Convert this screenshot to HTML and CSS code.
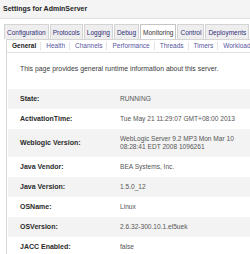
FILE: index.html
```html
<!DOCTYPE html>
<html lang="en">
<head>
    <meta charset="UTF-8">
    <title>Settings for AdminServer</title>
    <link rel="stylesheet" href="styles.css">
</head>
<body>
    <div class="header">
        <h1>Settings for AdminServer</h1>
    </div>

    <ul class="tabs">
        <li>Configuration</li>
        <li>Protocols</li>
        <li>Logging</li>
        <li>Debug</li>
        <li class="active">Monitoring</li>
        <li>Control</li>
        <li>Deployments</li>
    </ul>

    <div class="panel">
        <ul class="subtabs">
            <li class="active">General</li>
            <li>Health</li>
            <li>Channels</li>
            <li>Performance</li>
            <li>Threads</li>
            <li>Timers</li>
            <li>Workload</li>
        </ul>

        <p class="intro">This page provides general runtime information about this server.</p>

        <table class="info">
            <tr class="odd"><th>State:</th><td>RUNNING</td></tr>
            <tr><th>ActivationTime:</th><td>Tue May 21 11:29:07 GMT+08:00 2013</td></tr>
            <tr class="odd"><th>Weblogic Version:</th><td>WebLogic Server 9.2 MP3 Mon Mar 10 08:28:41 EDT 2008 1096261</td></tr>
            <tr><th>Java Vendor:</th><td>BEA Systems, Inc.</td></tr>
            <tr class="odd"><th>Java Version:</th><td>1.5.0_12</td></tr>
            <tr><th>OSName:</th><td>Linux</td></tr>
            <tr class="odd"><th>OSVersion:</th><td>2.6.32-300.10.1.el5uek</td></tr>
            <tr><th>JACC Enabled:</th><td>false</td></tr>
        </table>
    </div>
</body>
</html>
```

FILE: styles.css
```css
*{margin: 0;padding: 0;}

body{
    width: 250px;
    height: 254px;
    overflow: hidden;
    background-color: #ffffff;
    font-family: "Liberation Sans", Arial, sans-serif;
    font-size: 6.5px;
    line-height: 8px;
    color: #333333;
}

.header{
    height: 18px;
    background-color: #f4f4f4;
    border-bottom: 1px solid #e0e0e0;
    padding-left: 3px;
    display: flex;
    align-items: center;
}

.header h1{
    font-size: 7px;
    font-weight: bold;
    color: #1e1e1e;
}

.tabs{
    list-style: none;
    display: flex;
    margin: 5px 0 0 4px;
    white-space: nowrap;
    overflow: hidden;
}

.tabs li{
    flex: none;
    padding: 4px 2px 2px 2px;
    margin-right: 1px;
    background-color: #eeeeee;
    border: 1px solid #d4d4d4;
    border-bottom: none;
    color: #2f2f7a;
}

.tabs li.active{
    background-color: #ffffff;
    border-color: #c4c4c4;
    color: #333333;
}

.panel{
    margin-left: 6px;
    border-left: 1px solid #d8d8d8;
    border-top: 1px solid #d4d4d4;
    height: 215px;
    overflow: hidden;
}

.subtabs{
    list-style: none;
    display: flex;
    white-space: nowrap;
    overflow: hidden;
    padding: 2px 0 2px 0;
    border-bottom: 1px solid #e0e0e0;
}

.subtabs li{
    flex: none;
    padding: 0 4px 0 5px;
    border-right: 1px solid #e4e4e4;
    color: #56569e;
}

.subtabs li.active{
    font-weight: bold;
    color: #222222;
}

.intro{
    height: 36px;
    padding: 12px 0 0 13px;
    box-sizing: border-box;
    font-size: 6.9px;
    color: #3a3a3a;
}

.info{
    border-collapse: collapse;
    width: 100%;
    margin-left: 1px;
}

.info th, .info td{
    text-align: left;
    vertical-align: middle;
    padding: 6px 0;
    line-height: 8px;
}

.info th{
    width: 100px;
    padding-left: 12px;
    font-size: 7px;
    font-weight: bold;
    color: #2a2a2a;
}

.info td{
    font-size: 6.6px;
    color: #555555;
    padding-right: 8px;
}

.info tr.odd{
    background-color: #f3f3f3;
}
```
